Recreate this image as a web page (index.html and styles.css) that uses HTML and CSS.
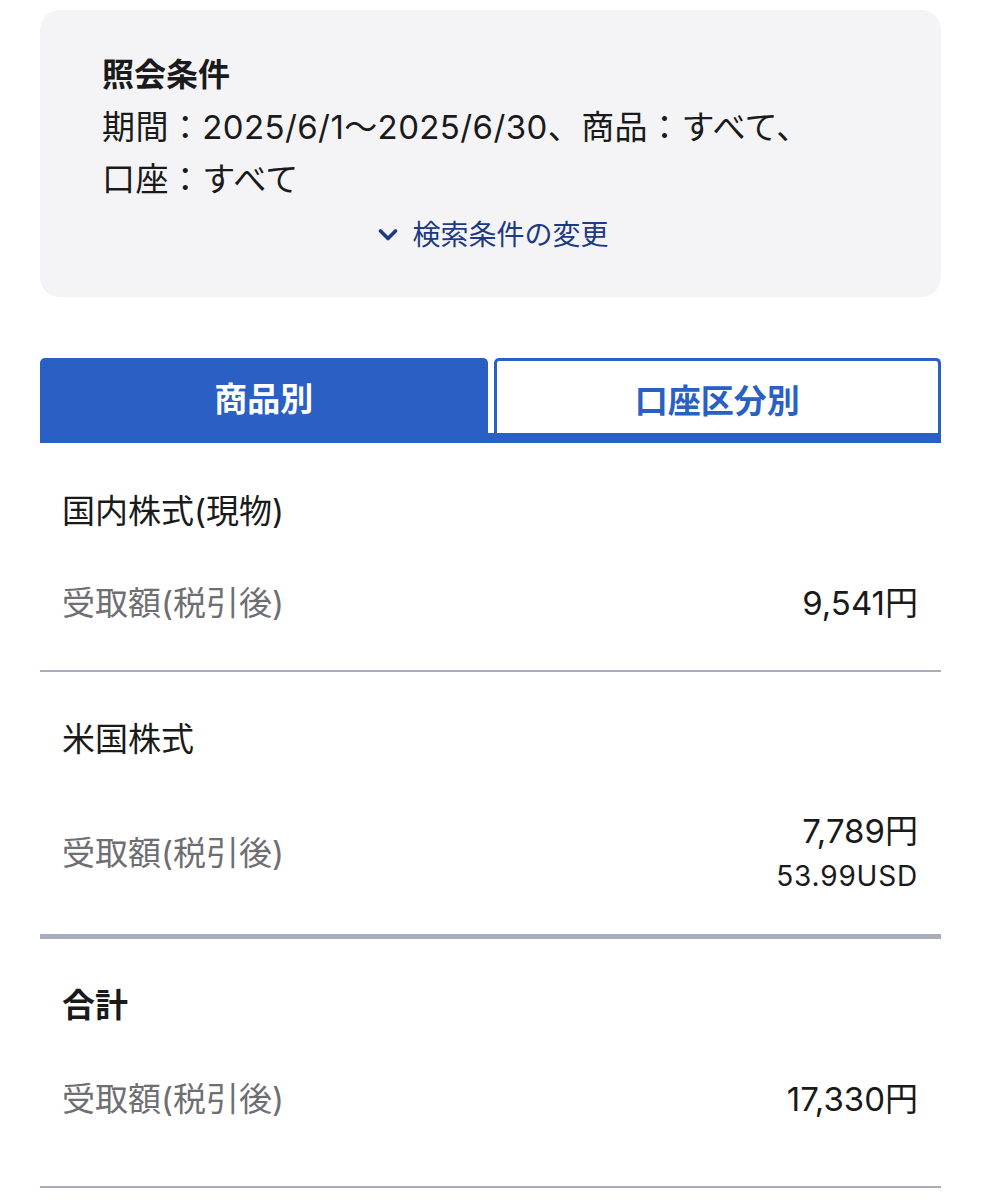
FILE: index.html
```html
<!DOCTYPE html>
<html lang="ja">
<head>
    <meta charset="UTF-8">
    <meta name="viewport" content="width=device-width, initial-scale=1.0">
    <title>配当金・分配金</title>
    <link rel="stylesheet" href="styles.css">
</head>
<body>
    <div class="page">
        <div class="cond">
            <div class="cond-title">照会条件</div>
            <div class="cond-text">期間：2025/6/1〜2025/6/30、商品：すべて、<br>口座：すべて</div>
            <a class="cond-link" href="#">
                <svg width="20" height="14" viewBox="0 0 20 14"><polyline points="2.5,3 10,10.5 17.5,3" fill="none" stroke="#1d3a82" stroke-width="3.6" stroke-linecap="round" stroke-linejoin="round"/></svg>
                検索条件の変更
            </a>
        </div>

        <div class="tabs">
            <div class="tab active">商品別</div>
            <div class="tab">口座区分別</div>
        </div>

        <div class="row">
            <div class="row-name">国内株式(現物)</div>
            <div class="row-line">
                <span class="label">受取額(税引後)</span>
                <div class="values">
                    <div class="amount">9,541円</div>
                </div>
            </div>
        </div>

        <div class="row thick">
            <div class="row-name">米国株式</div>
            <div class="row-line">
                <span class="label">受取額(税引後)</span>
                <div class="values">
                    <div class="amount">7,789円</div>
                    <div class="sub">53.99USD</div>
                </div>
            </div>
        </div>

        <div class="row total">
            <div class="row-name">合計</div>
            <div class="row-line">
                <span class="label">受取額(税引後)</span>
                <div class="values">
                    <div class="amount">17,330円</div>
                </div>
            </div>
        </div>
    </div>
</body>
</html>
```

FILE: styles.css
```css
body {
    margin: 0;
    background: #ffffff;
    color: #1a1a1a;
    font-family: Inter, "Noto Sans CJK JP", sans-serif;
}
.page {
    padding: 10px 41px 0 40px;
}
.cond {
    background: #f4f4f7;
    border-radius: 20px;
    padding: 39px 30px 42px 62px;
}
.cond-title {
    font-size: 32px;
    font-weight: bold;
    line-height: 52px;
}
.cond-text {
    font-size: 33px;
    line-height: 52px;
    letter-spacing: 0.4px;
}
.cond-link {
    display: flex;
    align-items: center;
    justify-content: center;
    gap: 14px;
    margin: 10px 0 0 -62px;
    padding-left: 36px;
    color: #1d3a82;
    font-size: 28px;
    line-height: 40px;
    text-decoration: none;
}
.tabs {
    display: flex;
    gap: 6px;
    margin-top: 61px;
    border-bottom: 10px solid #2a5fc4;
}
.tab {
    flex: 1;
    height: 75px;
    box-sizing: border-box;
    display: flex;
    align-items: center;
    justify-content: center;
    font-size: 33px;
    font-weight: bold;
    color: #2a5fc4;
    border: 3px solid #2a5fc4;
    border-bottom: none;
    border-radius: 5px 5px 0 0;
    padding-top: 3px;
}
.tab.active {
    background: #2a5fc4;
    color: #ffffff;
    padding-top: 0;
}
.row {
    padding: 46px 23px 45px 22px;
    border-bottom: 2px solid #a9adb8;
}
.row.thick {
    padding-top: 45px;
    padding-bottom: 38px;
    border-bottom: 5px solid #a7adba;
}
.row.total {
    padding-top: 44px;
    padding-bottom: 65px;
}
.row-name {
    font-size: 33px;
    line-height: 44px;
}
.total .row-name {
    font-weight: bold;
}
.row-line {
    display: flex;
    justify-content: space-between;
    align-items: center;
    margin-top: 48px;
}
.total .row-line {
    margin-top: 50px;
}
.label {
    font-size: 33px;
    line-height: 44px;
    color: #6e6e73;
}
.values {
    text-align: right;
}
.amount {
    font-size: 33px;
    line-height: 44px;
}
.sub {
    font-size: 28px;
    line-height: 40px;
    letter-spacing: 0.8px;
    margin-top: 3px;
}
```
